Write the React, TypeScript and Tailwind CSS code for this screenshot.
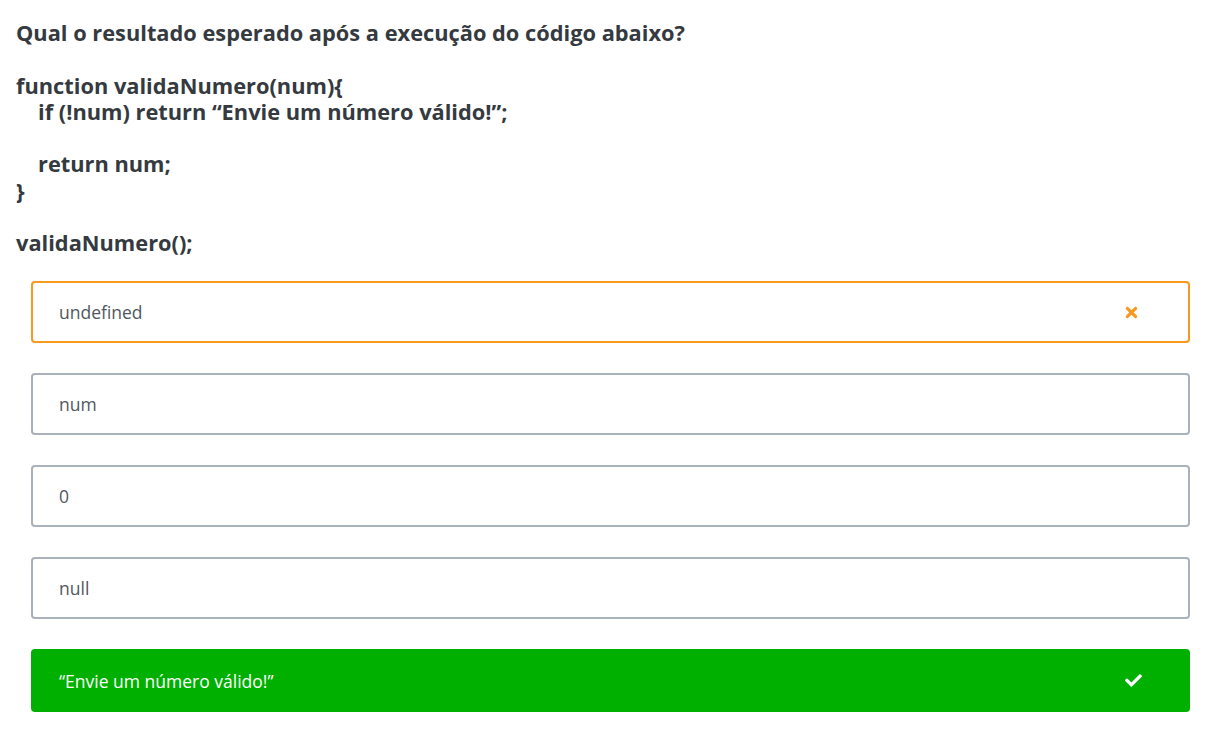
import { FaTimes, FaCheck } from "react-icons/fa";

type Option = {
  label: string;
  state?: "wrong" | "right";
};

const options: Option[] = [
  { label: "undefined", state: "wrong" },
  { label: "num" },
  { label: "0" },
  { label: "null" },
  { label: "“Envie um número válido!”", state: "right" },
];

function OptionRow({ option }: { option: Option }) {
  if (option.state === "right") {
    return (
      <div className="flex items-center justify-between h-[63px] rounded-[4px] bg-[#00b000] pl-[28px] pr-[48px] text-white text-[17.5px]">
        <span>{option.label}</span>
        <FaCheck className="w-[17px] h-[17px]" />
      </div>
    );
  }
  const wrong = option.state === "wrong";
  return (
    <div
      className={`flex items-center justify-between h-[62px] rounded-[4px] border-2 pl-[26px] pr-[48px] text-[17.5px] text-[#50575e] bg-white ${
        wrong ? "border-[#f7981f]" : "border-[#a9b2ba]"
      }`}
    >
      <span>{option.label}</span>
      {wrong && <FaTimes className="w-[17px] h-[17px] text-[#f7981f]" />}
    </div>
  );
}

export default function App() {
  return (
    <div className="min-h-screen bg-white font-['Open_Sans',sans-serif] pt-[20px] pl-[16px] pr-[32px]">
      <div className="text-[21.8px] leading-[26.25px] font-bold text-[#343a40]">
        <p>Qual o resultado esperado após a execução do código abaixo?</p>
        <p>&nbsp;</p>
        <p>function validaNumero(num){"{"}</p>
        <p className="pl-[22px]">if (!num) return “Envie um número válido!”;</p>
        <p>&nbsp;</p>
        <p className="pl-[22px]">return num;</p>
        <p>{"}"}</p>
        <p>&nbsp;</p>
        <p>validaNumero();</p>
      </div>
      <div className="flex flex-col gap-[30px] pl-[15px] mt-[25px]">
        {options.map((o) => (
          <OptionRow key={o.label} option={o} />
        ))}
      </div>
    </div>
  );
}
